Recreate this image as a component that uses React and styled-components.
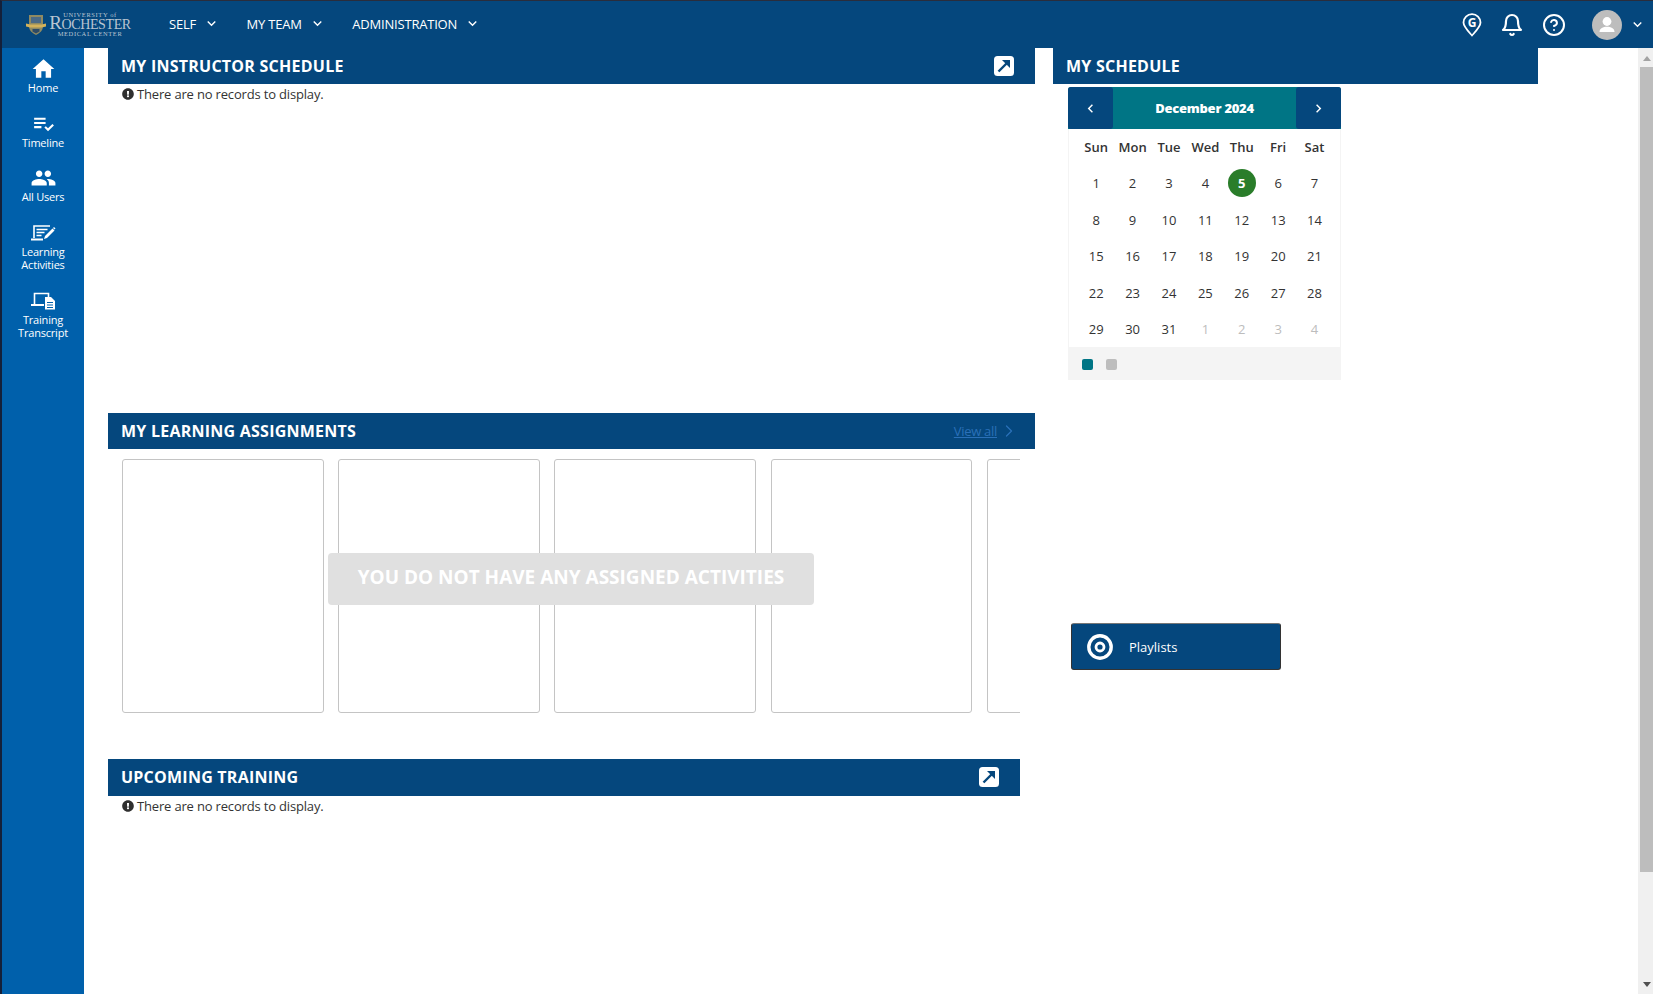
import React from "react";
import styled, { createGlobalStyle } from "styled-components";
import {
  MdHome,
  MdPlaylistAddCheck,
  MdPeople,
  MdKeyboardArrowDown,
  MdChevronLeft,
  MdChevronRight,
} from "react-icons/md";
import { FaExclamationCircle } from "react-icons/fa";
import { LuBell, LuCircleHelp, LuChevronRight } from "react-icons/lu";

const navy = "#05477d";
const font = `"Open Sans", "Liberation Sans", sans-serif`;

const GlobalStyle = createGlobalStyle`
  html, body {
    margin: 0;
    padding: 0;
    height: 100%;
    overflow: hidden;
    background: #fff;
  }
  * { box-sizing: border-box; }
  #root { height: 100%; }
`;

const weekdays = ["Sun", "Mon", "Tue", "Wed", "Thu", "Fri", "Sat"];
const days = [
  ...Array.from({ length: 31 }, (_, i) => ({ label: i + 1, muted: false })),
  ...[1, 2, 3, 4].map((d) => ({ label: d, muted: true })),
];

function ExpandIcon() {
  return (
    <svg width="20" height="20" viewBox="0 0 20 20">
      <rect width="20" height="20" rx="3.5" fill="#fff" />
      <path d="M4.5 15.5 13 7" stroke={navy} strokeWidth="2.4" fill="none" />
      <path d="M8 4h8v8z" fill={navy} />
    </svg>
  );
}

function LearningIcon() {
  return (
    <svg width="26" height="18" viewBox="0 0 26 18" fill="none" stroke="#fff">
      <path d="M4 14V2h16" strokeWidth="1.6" />
      <path d="M1 15.5h12" strokeWidth="2" />
      <path d="M6.5 5.5h11M6.5 8.5h8M6.5 11.5h5" strokeWidth="1.7" />
      <path d="M14 15l1-3 7.5-7.5 2 2L17 14z" fill="#fff" stroke="none" />
      <path d="M23 4l1-1 1.5 1.5-1 1z" fill="#fff" stroke="none" />
    </svg>
  );
}

function TranscriptIcon() {
  return (
    <svg width="26" height="18" viewBox="0 0 26 18" fill="none">
      <path d="M4.5 12V1.5h14V5" stroke="#fff" strokeWidth="1.6" />
      <path d="M1 13h13" stroke="#fff" strokeWidth="2" />
      <path d="M15 5h6l4 4v8.5H15z" fill="#fff" />
      <path d="M17 10.5h6M17 13h6M17 15.5h6" stroke="#0060ab" strokeWidth="1.1" />
    </svg>
  );
}

function GuidePin() {
  return (
    <svg width="20" height="24" viewBox="0 0 20 24">
      <path
        d="M10 22.5C5 17 1.5 13.6 1.5 9.6a8.5 8.5 0 0 1 17 0c0 4-3.5 7.4-8.5 12.9z"
        fill="none"
        stroke="#fff"
        strokeWidth="1.8"
      />
      <text
        x="10"
        y="14"
        textAnchor="middle"
        fontFamily={font}
        fontWeight="700"
        fontSize="12"
        fill="#fff"
      >
        G
      </text>
    </svg>
  );
}

function Crest() {
  return (
    <svg width="20" height="22" viewBox="0 0 20 22">
      <path d="M3 1h14v11c0 5-3.5 7-7 9-3.5-2-7-4-7-9z" fill="#8f8a62" />
      <path d="M5 3h10v6H5z" fill="#4b6a86" />
      <path d="M0 9.5c3 1 5 1 10 1s7 0 10-1v3c-3 1-5 1-10 1s-7 0-10-1z" fill="#d3b25a" />
      <path d="M6.5 15h7v2.6L10 19.5l-3.5-1.9z" fill="#2d4a66" />
    </svg>
  );
}

function AvatarIcon() {
  return (
    <svg width="30" height="30" viewBox="0 0 30 30">
      <circle cx="15" cy="15" r="15" fill="#bdbdbd" />
      <circle cx="15" cy="11.5" r="4.4" fill="#fff" />
      <path d="M7.5 22c0-3.6 3.6-5.2 7.5-5.2s7.5 1.6 7.5 5.2z" fill="#fff" />
    </svg>
  );
}

function TargetIcon() {
  return (
    <svg width="26" height="26" viewBox="0 0 26 26">
      <circle cx="13" cy="13" r="11.2" fill="none" stroke="#fff" strokeWidth="3.4" />
      <circle cx="13" cy="13" r="4" fill="none" stroke="#fff" strokeWidth="2.8" />
    </svg>
  );
}

function NoRecords() {
  return (
    <Empty>
      <FaExclamationCircle size={12} color="#2f2f2f" />
      There are no records to display.
    </Empty>
  );
}

export default function App() {
  return (
    <>
      <GlobalStyle />
      <Page>
        <TopBar>
          <Logo>
            <Crest />
            <LogoText>
              <small>UNIVERSITY of</small>
              <strong><b>R</b>OCHESTER</strong>
              <small>MEDICAL CENTER</small>
            </LogoText>
          </Logo>
          <NavMenu>
            <NavItem>SELF <MdKeyboardArrowDown size={17} /></NavItem>
            <NavItem>MY TEAM <MdKeyboardArrowDown size={17} /></NavItem>
            <NavItem>ADMINISTRATION <MdKeyboardArrowDown size={17} /></NavItem>
          </NavMenu>
          <TopIcons>
            <GuidePin />
            <LuBell size={24} color="#fff" strokeWidth={2.2} />
            <LuCircleHelp size={24} color="#fff" strokeWidth={2} />
            <UserMenu>
              <AvatarIcon />
              <MdKeyboardArrowDown size={17} color="#fff" />
            </UserMenu>
          </TopIcons>
        </TopBar>

        <Body>
          <Sidebar>
            <SideItem $h={55}>
              <MdHome size={27} />
              <span>Home</span>
            </SideItem>
            <SideItem $h={54}>
              <MdPlaylistAddCheck size={25} />
              <span>Timeline</span>
            </SideItem>
            <SideItem $h={55}>
              <MdPeople size={27} />
              <span>All Users</span>
            </SideItem>
            <SideItem $h={68}>
              <LearningIcon />
              <span>Learning<br />Activities</span>
            </SideItem>
            <SideItem $h={68}>
              <TranscriptIcon />
              <span>Training<br />Transcript</span>
            </SideItem>
          </Sidebar>

          <Content>
            <LeftColumn>
              <Section $h={365}>
                <PanelHeader>
                  MY INSTRUCTOR SCHEDULE
                  <ExpandIcon />
                </PanelHeader>
                <NoRecords />
              </Section>

              <Section $h={346}>
                <PanelHeader>
                  MY LEARNING ASSIGNMENTS
                  <ViewAll>
                    <a>View all</a>
                    <LuChevronRight size={20} strokeWidth={1.5} />
                  </ViewAll>
                </PanelHeader>
                <CardStrip>
                  <Card />
                  <Card />
                  <Card />
                  <Card />
                  <Card />
                  <EmptyNotice>YOU DO NOT HAVE ANY ASSIGNED ACTIVITIES</EmptyNotice>
                </CardStrip>
              </Section>

              <Section $width={912}>
                <PanelHeader $tall $iconInset={21}>
                  UPCOMING TRAINING
                  <ExpandIcon />
                </PanelHeader>
                <NoRecords />
              </Section>
            </LeftColumn>

            <RightColumn>
              <PanelHeader>MY SCHEDULE</PanelHeader>
              <Calendar>
                <CalHeader>
                  <CalNav><MdChevronLeft size={17} /></CalNav>
                  <CalTitle>December 2024</CalTitle>
                  <CalNav><MdChevronRight size={17} /></CalNav>
                </CalHeader>
                <CalGrid>
                  {weekdays.map((w) => (
                    <Weekday key={w}>{w}</Weekday>
                  ))}
                  {days.map((d, i) => (
                    <Day key={i} $muted={d.muted} $today={!d.muted && d.label === 5}>
                      <span>{d.label}</span>
                    </Day>
                  ))}
                </CalGrid>
                <CalFooter>
                  <Legend $color="#007585" />
                  <Legend $color="#bdbdbd" />
                </CalFooter>
              </Calendar>
              <PlaylistButton>
                <TargetIcon />
                Playlists
              </PlaylistButton>
            </RightColumn>
          </Content>

          <Scrollbar>
            <ScrollArrow $up />
            <ScrollThumb />
            <ScrollArrow />
          </Scrollbar>
        </Body>
      </Page>
    </>
  );
}

const Page = styled.div`
  display: flex;
  flex-direction: column;
  height: 994px;
  overflow: hidden;
  border-top: 1px solid #2a2d3c;
  border-left: 2px solid #14203a;
  font-family: ${font};
  background: #fff;
`;

const TopBar = styled.header`
  display: flex;
  align-items: center;
  flex: 0 0 47px;
  background: ${navy};
  color: #fff;
`;

const Logo = styled.div`
  display: flex;
  align-items: center;
  gap: 4px;
  width: 167px;
  padding-left: 24px;
`;

const LogoText = styled.div`
  display: flex;
  flex-direction: column;
  align-items: center;
  width: 80px;
  font-family: "Liberation Serif", serif;
  color: #b9c5d1;
  line-height: 1;

  small {
    font-size: 6.5px;
    letter-spacing: 0.6px;
    white-space: nowrap;
  }
  strong {
    font-weight: 400;
    font-size: 14px;
    letter-spacing: -0.4px;
    margin: -5px 0 -1px;
    white-space: nowrap;
  }
  b {
    font-weight: 400;
    font-size: 19px;
  }
`;

const NavMenu = styled.nav`
  display: flex;
  gap: 26.5px;
  margin-top: -2px;
`;

const NavItem = styled.div`
  display: flex;
  align-items: center;
  gap: 7px;
  font-size: 13px;
  letter-spacing: -0.2px;
`;

const TopIcons = styled.div`
  display: flex;
  align-items: center;
  gap: 18px;
  margin-left: auto;
  margin-right: 7px;
`;

const UserMenu = styled.div`
  display: flex;
  align-items: center;
  gap: 7px;
  margin-left: 8.5px;
`;

const Body = styled.div`
  display: flex;
  flex: 1;
  min-height: 0;
`;

const Sidebar = styled.aside`
  display: flex;
  flex-direction: column;
  flex: 0 0 82px;
  padding-top: 8px;
  background: #0060ab;
  color: #fff;
`;

const SideItem = styled.div`
  display: flex;
  flex-direction: column;
  align-items: center;
  height: ${(p) => p.$h}px;
  text-align: center;
  font-size: 11px;
  line-height: 12.5px;
  letter-spacing: -0.2px;

  svg {
    flex: 0 0 26px;
  }
`;

const Content = styled.main`
  display: flex;
  flex: 1;
  gap: 18px;
  padding-left: 24px;
  min-width: 0;
`;

const LeftColumn = styled.div`
  display: flex;
  flex-direction: column;
  flex: 0 0 927px;
`;

const RightColumn = styled.div`
  display: flex;
  flex-direction: column;
  flex: 0 0 485px;
`;

const Section = styled.section`
  ${(p) => p.$h && `height: ${p.$h}px;`}
  ${(p) => p.$width && `width: ${p.$width}px;`}
`;

const PanelHeader = styled.h2`
  display: flex;
  align-items: center;
  justify-content: space-between;
  height: ${(p) => (p.$tall ? 37 : 36)}px;
  margin: 0;
  padding: 0 ${(p) => p.$iconInset || 21}px ${(p) => (p.$tall ? 1 : 0)}px 13px;
  background: ${navy};
  color: #fff;
  font-size: 16px;
  font-weight: 700;
  letter-spacing: 0.24px;
`;

const Empty = styled.div`
  display: flex;
  align-items: center;
  gap: 3px;
  padding: 2px 0 0 14px;
  color: #333;
  font-size: 13px;
  line-height: 16px;
  letter-spacing: -0.17px;
`;

const ViewAll = styled.div`
  display: flex;
  align-items: center;
  gap: 2px;
  margin-right: -5px;
  color: #2a70b8;
  font-size: 13px;
  font-weight: 400;
  letter-spacing: -0.3px;

  a {
    text-decoration: underline;
  }
`;

const CardStrip = styled.div`
  position: relative;
  display: flex;
  gap: 14.5px;
  width: 898px;
  height: 254px;
  margin: 10px 0 0 14px;
  overflow: hidden;
`;

const Card = styled.div`
  flex: 0 0 201.7px;
  border: 1px solid #c4c4c4;
  border-radius: 3px;
`;

const EmptyNotice = styled.div`
  position: absolute;
  left: 206px;
  top: 94px;
  width: 486px;
  height: 52px;
  display: flex;
  align-items: center;
  justify-content: center;
  padding-bottom: 5px;
  background: #e0e0e0;
  border-radius: 4px;
  color: #fff;
  font-size: 19px;
  font-weight: 700;
`;

const Calendar = styled.div`
  width: 273px;
  margin: 3px 0 0 15px;
  border: 1px solid #f4f4f4;
  border-top: 0;
`;

const CalHeader = styled.div`
  display: flex;
  height: 42px;
  margin: 0 -1px;
  background: #007585;
  border-radius: 3px 3px 0 0;
  color: #fff;
`;

const CalNav = styled.div`
  display: flex;
  align-items: center;
  justify-content: center;
  flex: 0 0 45px;
  background: ${navy};
  border-radius: 3px;
`;

const CalTitle = styled.div`
  flex: 1;
  text-align: center;
  font-size: 13px;
  font-weight: 800;
  letter-spacing: -0.25px;
  line-height: 42px;
`;

const CalGrid = styled.div`
  display: grid;
  grid-template-columns: repeat(7, 36.4px);
  grid-template-rows: 35.8px;
  grid-auto-rows: 36.5px;
  padding: 0 8px 0 9px;
`;

const Weekday = styled.div`
  display: flex;
  align-items: center;
  justify-content: center;
  padding-top: 1px;
  color: #333;
  font-size: 13px;
  font-weight: 600;
`;

const Day = styled.div`
  display: flex;
  align-items: center;
  justify-content: center;
  color: ${(p) => (p.$muted ? "#bdbdbd" : "#333")};
  font-size: 13px;

  span {
    display: flex;
    align-items: center;
    justify-content: center;
    width: 28px;
    height: 28px;
    border-radius: 50%;
    ${(p) => p.$today && "background: #2a7d2a; color: #fff; font-weight: 700;"}
  }
`;

const CalFooter = styled.div`
  display: flex;
  gap: 13px;
  height: 32px;
  padding: 12px 0 0 13px;
  background: #f4f4f4;
`;

const Legend = styled.div`
  width: 11px;
  height: 11px;
  border-radius: 2px;
  background: ${(p) => p.$color};
`;

const PlaylistButton = styled.div`
  display: flex;
  align-items: center;
  gap: 16px;
  width: 210px;
  height: 47px;
  margin: 243px 0 0 18px;
  padding-left: 15px;
  background: ${navy};
  border: 1px solid #333;
  border-top-color: #777;
  border-radius: 3px;
  color: #fff;
  font-size: 13px;
`;

const Scrollbar = styled.div`
  display: flex;
  flex-direction: column;
  flex: 0 0 15px;
  margin-left: auto;
  background: #f0f0f0;
`;

const ScrollArrow = styled.div`
  flex: 0 0 ${(p) => (p.$up ? 19 : 17)}px;
  width: 100%;
  position: relative;

  &::after {
    content: "";
    position: absolute;
    left: 5px;
    top: ${(p) => (p.$up ? 8 : 5)}px;
    border-left: 4.5px solid transparent;
    border-right: 4.5px solid transparent;
    ${(p) =>
      p.$up
        ? "border-bottom: 5px solid #a3a3a3;"
        : "border-top: 5px solid #505050;"}
  }
`;

const ScrollThumb = styled.div`
  align-self: flex-end;
  width: 13px;
  height: 805px;
  margin-bottom: auto;
  background: #bdbdbd;
`;
